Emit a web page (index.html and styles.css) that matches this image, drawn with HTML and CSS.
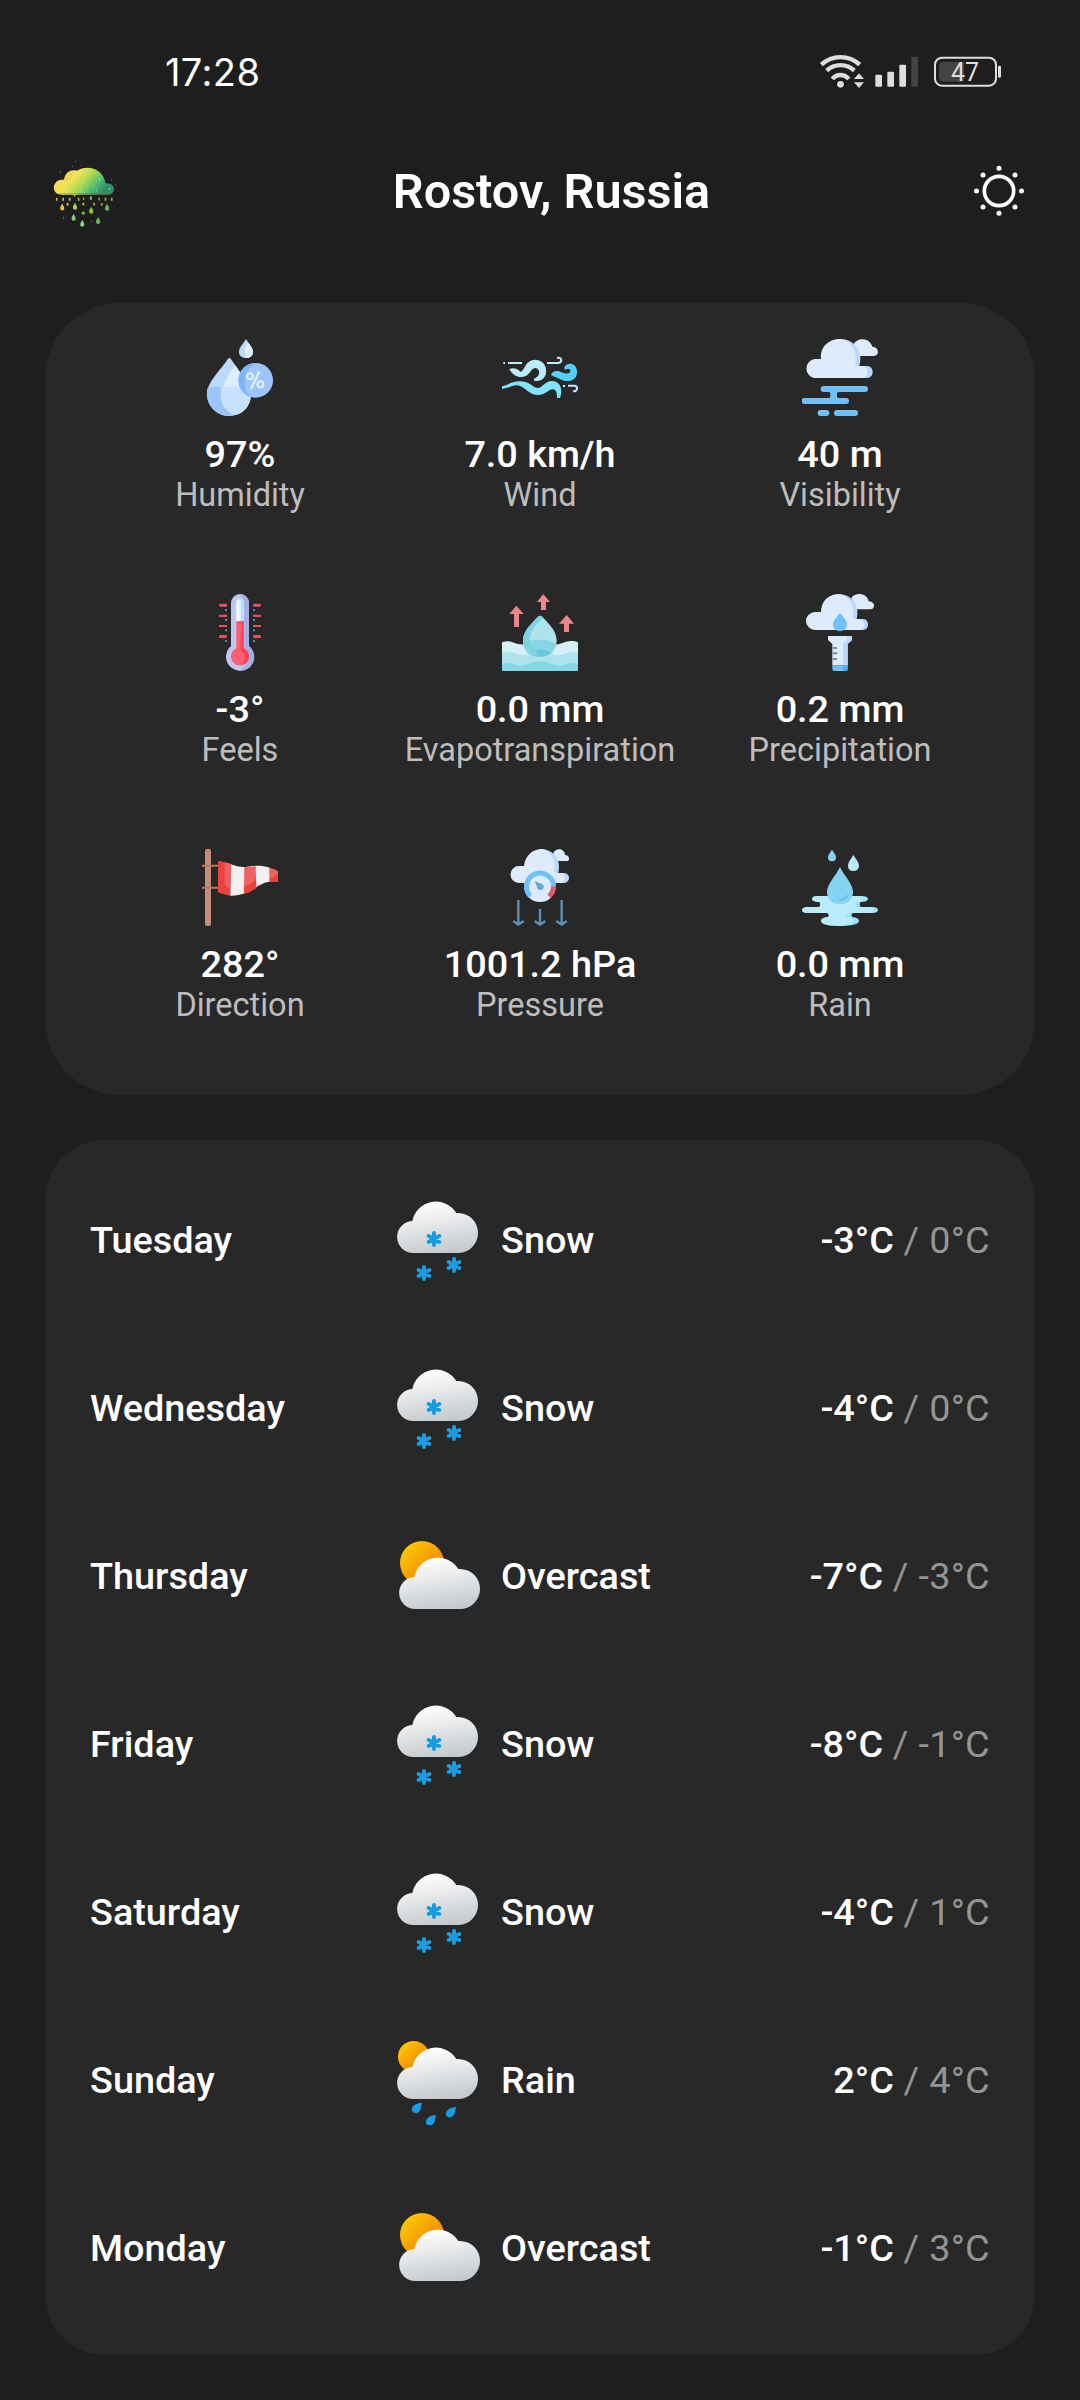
FILE: index.html
```html
<!DOCTYPE html>
<html lang="en">
<head>
<meta charset="utf-8">
<title>Weather</title>
<link rel="stylesheet" href="styles.css">
</head>
<body>
<svg class="defs" aria-hidden="true">
  <defs>
    <linearGradient id="cloudFill" x1="0.4" y1="0" x2="0.65" y2="1">
      <stop offset="0" stop-color="#ffffff"/><stop offset="1" stop-color="#c4c9cd"/>
    </linearGradient>
    <linearGradient id="sunFill" x1="0.1" y1="0.15" x2="0.75" y2="0.85">
      <stop offset="0" stop-color="#ffc800"/><stop offset="1" stop-color="#f07f00"/>
    </linearGradient>
    <path id="cloud" fill="url(#cloudFill)" d="M102 219A48 48 0 0 1 97 123A72 72 0 0 1 229 99H234A60 60 0 0 1 234 219Z"/>
    <path id="flake" fill="none" stroke="#1a9ce5" stroke-width="12" stroke-linecap="round" d="M0-18V18M-16-9L16 9M-16 9L16-9"/>
    <path id="drip" fill="#1a9ce5" d="M15-16C7-15-3-13-9-8C-17-1-17 8-11 13C-4 18 6 15 10 6C13-1 13-9 15-16Z"/>
    <symbol id="snow" viewBox="45 45 270 270">
      <use href="#cloud"/>
      <use href="#flake" x="162" y="177"/><use href="#flake" x="222" y="255"/><use href="#flake" x="132" y="279"/>
    </symbol>
    <symbol id="overcast" viewBox="45 45 270 270">
      <circle cx="126" cy="141" r="66" fill="url(#sunFill)"/>
      <use href="#cloud" x="6" y="60"/>
    </symbol>
    <symbol id="rain" viewBox="45 45 270 270">
      <circle cx="101" cy="110" r="47" fill="url(#sunFill)"/>
      <use href="#cloud" y="18"/>
      <use href="#drip" x="111" y="264"/><use href="#drip" x="153" y="301"/><use href="#drip" x="213" y="277"/>
    </symbol>
    <linearGradient id="logoFill" x1="0.1" y1="0.2" x2="0.95" y2="0.55">
      <stop offset="0" stop-color="#fbd64e"/><stop offset="0.3" stop-color="#f0e35a"/><stop offset="0.52" stop-color="#b4dc52"/><stop offset="0.78" stop-color="#4cbd73"/><stop offset="1" stop-color="#2f8f66"/>
    </linearGradient>
    <linearGradient id="logoBack" x1="0" y1="0" x2="0" y2="1">
      <stop offset="0" stop-color="#f5e35c"/><stop offset="1" stop-color="#e9b43c"/>
    </linearGradient>
    <path id="bead" d="M0-11C3-5 6-1 6 4A6 6 0 0 1-6 4C-6-1-3-5 0-11Z"/>
  </defs>
</svg>

<header class="status">
  <span class="clock">17:28</span>
  <div class="indicators">
    <svg class="wifi" viewBox="117 40 144 108">
      <g fill="none" stroke="#dedede" stroke-width="13">
        <path d="M124 75A84 84 0 0 1 239 75"/><path d="M140 93A60 60 0 0 1 223 93"/><path d="M157 118A31 31 0 0 1 206 118"/>
      </g>
      <circle cx="181.500" cy="134" r="10" fill="#dedede"/>
      <path fill="#dedede" d="M237 101L252 118H222ZM222 128H252L237 145Z"/>
    </svg>
    <svg class="signal" viewBox="282 40 138 108">
      <g fill="#dedede"><rect x="286" y="105" width="20" height="36" rx="3"/><rect x="322" y="96" width="20" height="45" rx="3"/><rect x="358" y="75" width="20" height="66" rx="3"/></g>
      <rect x="394" y="51" width="20" height="90" rx="3" fill="#444"/>
    </svg>
    <svg class="battery" viewBox="459 40 210 108">
      <rect x="465" y="54" width="183" height="84" rx="21" fill="none" stroke="#dedede" stroke-width="6"/>
      <path fill="#444" d="M492 66H552V126H492Q477 126 477 111V81Q477 66 492 66Z"/>
      <rect x="654" y="78" width="9" height="36" rx="4" fill="#dedede"/>
      <text x="555" y="124" class="charge">47</text>
    </svg>
  </div>
</header>

<div class="appbar">
  <svg class="logo" viewBox="131 363 232 232" preserveAspectRatio="none">
    <path fill="url(#logoBack)" d="M182 495A23 23 0 0 1 186 450C190 414 228 416 238 432L240 495Z"/>
    <path fill="url(#logoFill)" d="M178 495C156 494 150 470 164 456C172 449 182 449 190 451C198 452 203 456 206 448C216 404 295 396 307 460C340 459 337 495 312 495Z"/>
    <path d="M170 492H320" stroke="#8a6a20" stroke-opacity=".35" stroke-width="5"/>
    <g fill="#eaf7c0" opacity=".6"><rect x="218" y="442" width="3" height="4"/><rect x="239" y="455" width="3" height="5"/><rect x="253" y="467" width="3" height="4"/><rect x="269" y="469" width="3" height="4"/><rect x="287" y="446" width="3" height="6"/><rect x="200" y="480" width="3" height="6"/><rect x="279" y="480" width="3" height="4"/><rect x="317" y="474" width="3" height="6"/><rect x="237" y="480" width="3" height="4"/></g>
    <g fill="#666"><rect x="218" y="392" width="3" height="4"/><rect x="209" y="407" width="3" height="4"/><rect x="235" y="405" width="3" height="3"/><rect x="174" y="423" width="3" height="6"/><rect x="322" y="448" width="3" height="4"/><rect x="334" y="463" width="3" height="4"/><rect x="183" y="561" width="3" height="6"/><rect x="264" y="573" width="3" height="4"/></g>
    <g fill="#d5b83c"><rect x="163" y="504" width="4" height="9"/><rect x="181" y="504" width="5" height="9"/><rect x="200" y="504" width="5" height="9"/><rect x="194" y="519" width="5" height="9"/><rect x="214" y="493" width="5" height="7"/></g>
    <g fill="#8fbe3c"><rect x="226" y="504" width="5" height="9"/><rect x="241" y="503" width="4" height="7"/><rect x="261" y="500" width="6" height="10"/><rect x="286" y="504" width="4" height="8"/><rect x="304" y="504" width="5" height="9"/><rect x="322" y="504" width="5" height="9"/><rect x="239" y="519" width="6" height="8"/><rect x="271" y="519" width="5" height="8"/><rect x="293" y="520" width="5" height="8"/></g>
    <use href="#bead" x="181" y="532" fill="#ecc03f"/><use href="#bead" x="218" y="530" fill="#b5d24a"/><use href="#bead" x="311" y="533" fill="#74b843"/><use href="#bead" x="265" y="542" fill="#8cc63f"/><use href="#bead" x="214" y="563" fill="#84c67a"/><use href="#bead" x="285" y="573" fill="#6dbb4a"/><use href="#bead" x="239" y="581" fill="#8bce84"/>
    <circle cx="242" cy="550" r="5" fill="#7cbb45"/>
  </svg>
  <h1>Rostov, Russia</h1>
  <svg class="theme" viewBox="567 364 180 180">
    <circle cx="657" cy="454" r="44" fill="none" stroke="#fff" stroke-width="11"/>
    <g fill="#fff"><circle cx="657" cy="386" r="7.500"/><circle cx="657" cy="521" r="7.500"/><circle cx="589.500" cy="454" r="7.500"/><circle cx="724.500" cy="454" r="7.500"/><circle cx="609" cy="406" r="7.500"/><circle cx="705" cy="406" r="7.500"/><circle cx="609" cy="502" r="7.500"/><circle cx="705" cy="502" r="7.500"/></g>
  </svg>
</div>

<main>
<section class="card metrics">
  <div class="metric">
    <svg viewBox="516 147 228 231">
      <path fill="#bbdafa" d="M648 147C655 160 669 172 669 186C669 197 661 204 648 204S627 197 627 186C627 172 641 160 648 147Z"/>
      <path fill="#dfefff" d="M654 157C661 167 669 177 669 186C669 197 661 204 651 204C641 192 643 170 654 157Z"/>
      <path fill="#bbdafa" d="M594 206Q598 202 602 206C614 223 624 236 634 252C646 269 663 288 663 312A66 66 0 0 1 531 312C531 275 573 239 594 206Z"/>
      <path fill="#dfefff" d="M616 227L634 252C647 270 657 281 661 296L580 292C586 266 601 243 616 227Z"/>
      <path fill="#9cc6fb" d="M534 291C545 296 551 287 560 289C568 291 570 294 580 292L613 376A66 66 0 0 1 534 291Z"/>
      <path fill="#c8e1fe" d="M574 293C583 295 585 288 593 290C602 293 606 295 613 290C621 286 628 296 660 292C672 328 650 372 613 376C576 358 566 326 574 293Z"/>
      <circle cx="677" cy="271" r="52" fill="#9cc6fb"/>
      <path fill="#7fb3fb" d="M677 219A52 52 0 0 0 663 321C637 299 635 243 677 219Z"/>
      <g fill="none" stroke="#e3effc" stroke-width="6"><circle cx="660" cy="259" r="9"/><circle cx="691" cy="283" r="9"/><path stroke-linecap="round" stroke-width="7" d="M687 247L664 294"/></g>
    </svg>
    <strong>97%</strong><span>Humidity</span>
  </div>
  <div class="metric">
    <svg viewBox="306 57 228 231">
      <path fill="#b9ecfd" d="M328 147C341 142 353 146 361 155C367 157 372 145 377 136C395 108 434 117 438 147C442 174 421 187 402 182V176C416 171 423 157 413 147C403 138 394 151 388 159C374 178 342 175 328 147Z"/>
      <path fill="#52d2fa" d="M453 164C460 150 474 152 485 157C501 164 514 160 511 150C507 144 501 149 494 149C487 130 528 120 531 153C533 183 502 190 480 177C470 171 461 171 453 164Z"/>
      <path fill="#81e4ff" d="M306 199C324 195 338 183 359 184C390 184 398 204 414 204C431 201 434 183 456 183C480 183 490 208 480 234H471C471 221 469 211 461 208C447 204 441 224 414 225C384 226 377 199 352 196C337 195 323 205 306 207Z"/>
      <path fill="none" stroke="#b9ecfd" stroke-width="6" d="M310 129H315M324 129H366M441 129H473Q484 129 484 120Q482 112 471 114M489 198H495M504 197H525Q532 199 531 207Q529 215 519 214"/>
    </svg>
    <strong>7.0 km/h</strong><span>Wind</span>
  </div>
  <div class="metric">
    <svg viewBox="186 57 228 231">
      <path fill="#deebfc" d="M340 74C350 51 389 51 397 80C419 81 418 107 402 108H350Z"/>
      <path fill="#bbd7fc" d="M300 57C345 57 371 97 358 138H382C404 139 403 173 382 174H310Z"/>
      <path fill="#deebfc" d="M223 174A29 29 0 0 1 223 117H243C239 79 269 57 300 57C334 62 355 97 345 138H366C388 139 388 173 366 174Z"/>
      <g fill="#6fc1fa"><rect x="242" y="198" width="142" height="18" rx="9"/><path d="M266 216Q271 216 271 220V230Q271 234 266 234H297Q291 234 291 230V220Q291 216 297 216Z"/><rect x="185" y="234" width="142" height="18" rx="9"/><rect x="233" y="270" width="35" height="18" rx="9"/><rect x="282" y="270" width="72" height="18" rx="9"/></g>
    </svg>
    <strong>40 m</strong><span>Visibility</span>
  </div>
  <div class="metric">
    <svg viewBox="156 72 228 231">
      <path fill="#bfc7ef" d="M243 99A27 27 0 0 1 297 99V228A42 42 0 1 1 243 228Z"/>
      <path fill="#a5afe4" d="M267 72A27 27 0 0 1 297 99V228A42 42 0 0 1 262 302C298 292 297 251 283 235V99Q281 81 267 72Z"/>
      <path fill="#dbf0ff" d="M259 98A11 11 0 0 1 281 98V153H259Z"/><path fill="#f4faff" d="M259 98Q261 90 267 87L269 153H259Z"/><path fill="#b6dbff" d="M273 87Q281 90 281 98V153H273Z"/>
      <path fill="#fd5f70" d="M259 153H281V235A27 27 0 1 1 259 235Z"/>
      <path fill="#fb4455" d="M276 153H281V235A27 27 0 0 1 281 284Q292 256 271 240Z"/>
      <g fill="#e25360"><rect x="207" y="101" width="24" height="9" rx="4"/><rect x="207" y="134" width="24" height="7"/><rect x="207" y="165" width="24" height="6"/><rect x="207" y="195" width="24" height="9" rx="4"/><rect x="309" y="101" width="24" height="9" rx="4"/><rect x="309" y="134" width="24" height="7"/><rect x="309" y="165" width="24" height="6"/><rect x="309" y="195" width="24" height="9" rx="4"/></g>
      <path stroke="#4b8eb8" stroke-width="6" d="M225 120H231M225 150H231M225 181H231M225 213H231M309 120H315M309 150H315M309 181H315M309 213H315"/>
    </svg>
    <strong>-3°</strong><span>Feels</span>
  </div>
  <div class="metric">
    <svg viewBox="306 72 228 231">
      <path fill="#d5f1f6" d="M306 217C318 213 328 213 338 217C355 224 370 226 388 221C420 212 445 231 475 223C495 217 512 208 534 217V262H306Z"/>
      <path fill="#aee2ec" d="M306 249C323 242 338 246 352 252C375 261 393 247 420 246C447 246 462 260 486 254C504 248 515 242 534 249V292H306Z"/>
      <path fill="#85d6e6" d="M306 281C322 275 336 279 351 285C376 294 391 275 420 274C450 274 462 293 487 286C504 280 516 275 534 281V300Q534 303 530 303H310Q306 303 306 300Z"/>
      <path fill="#aee2ec" d="M414 140Q420 135 427 140C445 161 470 180 470 212C470 243 448 260 420 260S369 243 369 212C369 181 395 161 414 140Z"/>
      <path fill="#85d6e6" d="M372 221Q397 208 420 209Q450 209 469 223C465 247 447 260 420 260S375 246 372 221Z"/>
      <path fill="#69c8dc" d="M385 248Q420 229 455 248Q440 260 420 260Q399 260 385 248Z"/>
      <path fill="#7dd3e6" d="M414 140Q420 135 427 140L429 145C397 172 379 204 397 228Q404 244 417 260C388 260 369 241 369 212C369 181 395 161 414 140Z"/>
      <path fill="#ed868b" d="M430 72L450 96H438V120H423V96H411ZM349 107L371 132H357V171H342V132H328ZM500 135L522 161H507V186H492V161H477Z"/>
    </svg>
    <strong>0.0 mm</strong><span>Evapotranspiration</span>
  </div>
  <div class="metric">
    <svg viewBox="186 72 228 231">
      <path fill="#deebfc" d="M334 83C346 67 381 67 386 94C407 95 406 117 391 118H350Z"/>
      <path fill="#bbd7fc" d="M297 72C338 74 360 107 350 147H370C389 148 389 179 370 180H310Z"/>
      <path fill="#deebfc" d="M225 180A27 27 0 0 1 225 126H243C243 92 267 72 297 72C330 80 346 110 338 147H359C378 149 377 179 359 180Z"/>
      <path fill="#6fc1fa" d="M300 128C309 140 321 151 321 164C321 175 312 183 300 183S279 175 279 164C279 151 291 140 300 128Z"/>
      <path fill="#deebfc" d="M264 198H336V210L323 222V286H277V222L264 210Z"/>
      <path fill="#bbd7fc" d="M321 198H336V210L323 222V286H309V222Q321 214 321 207Z"/>
      <path fill="#6fc1fa" d="M277 286H323V297Q323 303 317 303H283Q277 303 277 297Z"/><path fill="#55aef0" d="M309 286H323V297Q323 303 317 303H309Z"/>
      <path stroke="#6d8fac" stroke-width="6" d="M279 234H291M279 250H292M279 267H291"/>
    </svg>
    <strong>0.2 mm</strong><span>Precipitation</span>
  </div>
  <div class="metric">
    <svg viewBox="126 57 228 231">
      <rect x="135" y="57" width="18" height="231" rx="6" fill="#c68d7d"/>
      <path stroke="#b8785f" stroke-width="6" d="M126 107.500H174M126 173.500H174"/>
      <path fill="#f3f0f2" d="M211 102C230 110 248 112 262 110C285 106 305 105 329 113V155C290 159 270 198 211 197Z"/>
      <path fill="#e9423f" d="M174 96Q174 93 180 93L213 102L210 197Q190 194 174 187Z"/>
      <path fill="#f0605e" d="M194 97L213 102L210 174Q195 173 194 160Z"/>
      <path fill="#f0605e" d="M253 111Q270 112 287 108L289 174Q270 188 252 191Z"/>
      <path fill="#e9423f" d="M253 167Q274 165 288 146L289 173Q270 187 252 191Z"/>
      <path fill="#f0605e" d="M329 113Q344 117 354 124V155H330Z"/><path fill="#e9423f" d="M354 132V155H330V145Z"/>
    </svg>
    <strong>282°</strong><span>Direction</span>
  </div>
  <div class="metric">
    <svg viewBox="1026 57 228 231">
      <path fill="#deebfc" d="M1180 68C1190 52 1213 55 1215 74C1230 76 1230 92 1222 93H1185Z"/>
      <path fill="#bbd7fc" d="M1146 57C1188 61 1204 97 1195 129H1212C1233 130 1232 158 1212 159H1150Z"/>
      <path fill="#deebfc" d="M1077 159A25 25 0 0 1 1077 108H1092C1096 76 1118 57 1146 57C1174 63 1191 94 1183 129H1200C1219 131 1219 158 1200 159Z"/>
      <circle cx="1140" cy="169" r="47" fill="#deebfc"/>
      <path fill="none" stroke="#6fc1fa" stroke-width="15" d="M1111 198A40.500 40.500 0 1 1 1180.500 169"/>
      <path fill="none" stroke="#de5c69" stroke-width="15" d="M1180.500 169A40.500 40.500 0 0 1 1167 199"/>
      <path fill="#62aec8" d="M1124 153L1145 161A10 10 0 1 1 1131 170Z"/>
      <g fill="none" stroke="#5b93bd" stroke-width="7"><path d="M1075 210V285M1060 273L1075 284L1091 273M1140 237V285M1124 273L1140 284L1156 273M1205 210V285M1189 273L1205 284L1220 273"/></g>
    </svg>
    <strong>1001.2 hPa</strong><span>Pressure</span>
  </div>
  <div class="metric">
    <svg viewBox="186 57 228 231">
      <path fill="#84d3f0" d="M276 59C281 68 288 74 288 82A12 12 0 0 1 264 82C264 74 271 68 276 59Z"/>
      <path fill="#b8ecfd" d="M340 75C346 86 357 96 357 108Q356 123 340 123T324 108C324 96 334 86 340 75Z"/>
      <path fill="#9fe2f7" d="M231 198H369Q384 200 384 207Q383 216 362 216Q356 221 362 231H398Q414 232 414 240Q413 249 398 249H339Q330 254 338 262Q357 263 357 273Q356 287 300 288Q244 287 243 273Q244 263 263 262Q271 254 262 249H202Q186 248 186 240Q187 232 202 231H238Q244 222 238 216Q217 215 216 207Q217 199 231 198Z"/>
      <path fill="#b8ecfd" d="M231 198H350Q370 200 368 207Q367 215 350 216Q342 222 347 231H384Q400 232 399 240Q398 248 380 249H325Q314 254 320 262Q339 263 342 273Q339 286 300 288Q244 287 243 273Q244 263 263 262Q271 254 262 249H202Q186 248 186 240Q187 232 202 231H238Q244 222 238 216Q217 215 216 207Q217 199 231 198Z"/>
      <path fill="#84d3f0" d="M300 111C312 137 339 162 339 186C339 208 323 222 300 222S261 208 261 186C261 162 288 137 300 111Z"/>
      <path fill="none" stroke="#5fbfe0" stroke-width="5" stroke-linecap="round" d="M299 210Q315 210 323 197"/>
    </svg>
    <strong>0.0 mm</strong><span>Rain</span>
  </div>
</section>

<section class="card forecast">
  <div class="day"><span>Tuesday</span><span class="sky"><svg><use href="#snow"/></svg>Snow</span><span class="range">-3°C<em> / 0°C</em></span></div>
  <div class="day"><span>Wednesday</span><span class="sky"><svg><use href="#snow"/></svg>Snow</span><span class="range">-4°C<em> / 0°C</em></span></div>
  <div class="day"><span>Thursday</span><span class="sky"><svg><use href="#overcast"/></svg>Overcast</span><span class="range">-7°C<em> / -3°C</em></span></div>
  <div class="day"><span>Friday</span><span class="sky"><svg><use href="#snow"/></svg>Snow</span><span class="range">-8°C<em> / -1°C</em></span></div>
  <div class="day"><span>Saturday</span><span class="sky"><svg><use href="#snow"/></svg>Snow</span><span class="range">-4°C<em> / 1°C</em></span></div>
  <div class="day"><span>Sunday</span><span class="sky"><svg><use href="#rain"/></svg>Rain</span><span class="range">2°C<em> / 4°C</em></span></div>
  <div class="day"><span>Monday</span><span class="sky"><svg><use href="#overcast"/></svg>Overcast</span><span class="range">-1°C<em> / 3°C</em></span></div>
</section>
</main>
</body>
</html>
```
FILE: styles.css
```css
* { box-sizing: border-box; }
body {
  margin: 0;
  min-height: 2400px;
  background: #1e1e1e;
  color: #fff;
  font-family: Roboto, "Noto Sans", sans-serif;
}
svg { display: block; }
.defs { position: absolute; width: 0; height: 0; }

.status {
  height: 143px;
  padding: 53px 77px 0 165px;
  display: flex;
  justify-content: space-between;
  align-items: flex-start;
}
.clock { font: 400 38px/38px Inter, sans-serif; letter-spacing: 0.4px; }
.indicators { display: flex; }
.wifi { width: 48px; height: 36px; margin-right: 7px; }
.signal { width: 46px; height: 36px; margin-right: 13px; }
.battery { width: 70px; height: 36px; }
.charge { font: 450 75px Roboto, sans-serif; fill: #dedede; text-anchor: middle; }

.appbar {
  height: 160px;
  padding: 0 51px 0 45px;
  display: flex;
  align-items: flex-start;
}
.logo { width: 80px; height: 77px; margin-top: 8px; }
.theme { width: 60px; height: 60px; margin-top: 18px; }
h1 {
  flex: 1;
  margin: 21px 0 0;
  padding-left: 9px;
  text-align: center;
  font-size: 48.6px;
  line-height: 56px;
  font-weight: 600;
}

main { padding: 0 45px; display: flex; flex-direction: column; gap: 45px; }
.card { background: #282828; padding: 0 45px; border-radius: 75px; }

.metrics {
  height: 792px;
  padding-top: 36px;
  display: grid;
  grid-template-columns: repeat(3, 300px);
  grid-auto-rows: 255px;
  align-content: start;
}
.metric { display: flex; flex-direction: column; align-items: center; }
.metric svg { width: 76px; height: 77px; margin-bottom: 17px; }
.metric strong { font-weight: 500; font-size: 37.8px; line-height: 42px; white-space: nowrap; }
.metric span { margin-top: 1px; font-size: 32.5px; line-height: 38px; color: #bdbdbd; }

.forecast { height: 1215px; padding-top: 16px; border-radius: 60px; }
.day {
  height: 168px;
  display: grid;
  grid-template-columns: 305px 1fr auto;
  align-items: center;
  font-weight: 500;
  font-size: 37.8px;
  line-height: 42px;
}
.sky { display: flex; align-items: center; gap: 16px; }
.sky svg { width: 90px; height: 90px; }
.range em { font-style: normal; font-weight: 400; letter-spacing: 0.3px; color: #949494; }
```
